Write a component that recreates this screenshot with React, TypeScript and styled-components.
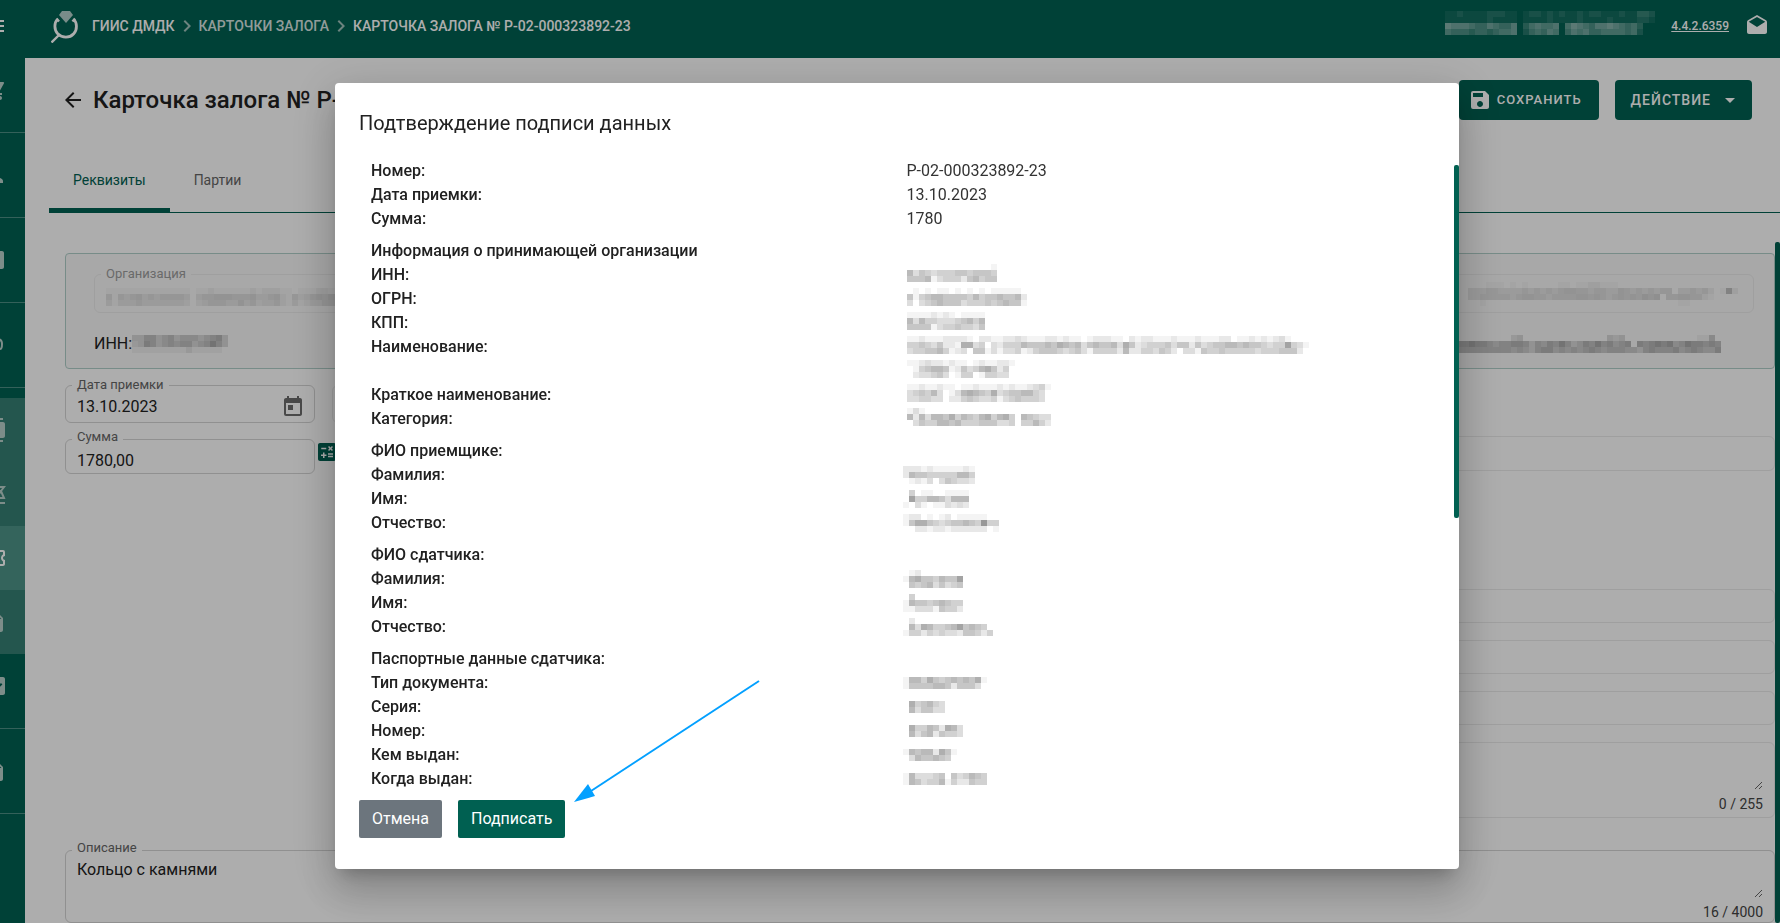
import React, { useId } from 'react';
import styled, { createGlobalStyle } from 'styled-components';
import {
  MdArrowBack, MdArrowDropDown, MdCalculate, MdChevronRight, MdDescription, MdDrafts, MdInsertDriveFile,
  MdMenu, MdSave, MdToday, MdArticle, MdContacts, MdOutlineConfirmationNumber, MdPerson,
  MdShoppingCart, MdFactCheck,
} from 'react-icons/md';

const green = '#006051';

const GlobalStyle = createGlobalStyle`
  *, *::before, *::after { box-sizing: border-box; }
  html, body, #root { height: 100%; }
  body {
    margin: 0;
    overflow: hidden;
    font: 400 16px/24px Roboto, "Liberation Sans", sans-serif;
    color: #212121;
    background: #fff;
  }
  button, input, textarea { font: inherit; color: inherit; }
`;

/* ---------- shell ---------- */

const Shell = styled.div`
  display: flex;
  flex-direction: column;
  height: 100vh;
  overflow: hidden;
`;

const Header = styled.header`
  flex: none;
  display: flex;
  align-items: center;
  height: 58px;
  padding: 0 11px 6px 0;
  background: ${green};
  color: #fff;
  overflow: hidden;
`;

const EdgeIcon = styled.div`
  flex: none;
  display: flex;
  justify-content: flex-end;
  width: 7px;
  margin-right: 44px;
  svg { flex: none; }
`;

const Crumbs = styled.nav`
  flex: 1;
  display: flex;
  align-items: center;
  margin-left: 14px;
  font-size: 14px;
  font-weight: 500;
  line-height: 20px;
  white-space: nowrap;
`;

const Crumb = styled.a<{ $dim?: boolean }>`
  color: ${(p) => (p.$dim ? '#d7e5e2' : '#fff')};
  text-decoration: none;
`;

const HeaderSide = styled.div`
  display: flex;
  align-items: center;
  gap: 16px;
`;

const Version = styled.a`
  color: #fff;
  font-size: 12px;
  font-weight: 500;
  line-height: 16px;
  text-decoration: underline;
`;

const PlainButton = styled.button`
  display: flex;
  padding: 0;
  border: 0;
  background: none;
  cursor: pointer;
`;

const Body = styled.div`
  flex: 1;
  display: flex;
  min-height: 0;
`;

const Sidebar = styled.nav`
  flex: none;
  width: 25px;
  background: ${green};
  overflow: hidden;
`;

const SideItem = styled.a<{ $short?: boolean }>`
  display: flex;
  align-items: center;
  justify-content: flex-end;
  height: ${(p) => (p.$short ? 75 : 85)}px;
  padding: 0 18px ${(p) => (p.$short ? 10 : 0)}px 0;
  border-bottom: 1px solid #4d8f85;
  color: #b9d0cb;
  svg { flex: none; }
`;

const SideGroup = styled.div`
  margin-top: 10px;
  background: #357f74;
`;

const SubItem = styled.a<{ $active?: boolean }>`
  display: flex;
  align-items: center;
  justify-content: flex-end;
  height: 64px;
  padding-right: 18px;
  color: ${(p) => (p.$active ? '#fff' : '#b9d0cb')};
  background: ${(p) => (p.$active ? '#4d9488' : 'transparent')};
  svg { flex: none; }
`;

/* ---------- page ---------- */

const Main = styled.main`
  flex: 1;
  display: flex;
  flex-direction: column;
  min-width: 0;
`;

const TitleRow = styled.div`
  flex: none;
  display: flex;
  align-items: center;
  gap: 8px;
  padding: 22px 28px 0 36px;
`;

const PageTitle = styled.h1`
  flex: 1;
  margin: 0;
  font-size: 24px;
  font-weight: 500;
  line-height: 32px;
  white-space: nowrap;
  overflow: hidden;
`;

const Actions = styled.div`
  display: flex;
  gap: 16px;
`;

const ActionButton = styled.button`
  display: flex;
  align-items: center;
  gap: 5px;
  height: 40px;
  padding: 0 17px 0 9px;
  border: 0;
  border-radius: 4px;
  background: ${green};
  color: #fff;
  font-size: 13px;
  font-weight: 500;
  letter-spacing: 1px;
  text-transform: uppercase;
`;

const MenuButton = styled(ActionButton)`
  padding: 0 10px 0 16px;
  gap: 7px;
  font-size: 14px;
`;

const Tabs = styled.div`
  flex: none;
  display: flex;
  height: 68px;
  margin: 25px 0 0 24px;
  border-bottom: 1px solid ${green};
`;

const Tab = styled.button<{ $active?: boolean }>`
  height: 68px;
  padding: 7px 24px 0;
  border: 0;
  border-bottom: 5px solid ${(p) => (p.$active ? green : 'transparent')};
  background: none;
  color: ${(p) => (p.$active ? green : '#666')};
  font-size: 14px;
  line-height: 20px;
`;

const ContentRow = styled.div`
  flex: 1;
  display: flex;
  min-height: 0;
  margin-top: 29px;
`;

const Content = styled.div`
  flex: 1;
  min-width: 0;
  overflow: hidden;
  padding: 11px 0 0 40px;
`;

const Rail = styled.div`
  flex: none;
  width: 5px;
`;

const Thumb = styled.div<{ $size: string; $offset?: number }>`
  width: 5px;
  height: ${(p) => p.$size};
  margin-top: ${(p) => p.$offset ?? 0}px;
  border-radius: 2px;
  background: ${green};
`;

const Card = styled.section`
  display: grid;
  grid-template-columns: 1fr 1fr;
  align-content: start;
  gap: 19px 16px;
  height: 116px;
  padding: 13px 20px 0 28px;
  border: 1px solid #b0cfc9;
  border-radius: 4px;
  background: #f8f8f8;
`;

const CardLine = styled.div<{ $end?: boolean }>`
  display: flex;
  align-items: center;
  justify-content: ${(p) => (p.$end ? 'flex-end' : 'flex-start')};
  height: 24px;
  padding-right: ${(p) => (p.$end ? 33 : 0)}px;
`;

const Frame = styled.fieldset<{ $h: number; $faint?: boolean; $w?: number }>`
  flex: ${(p) => (p.$w ? 'none' : '1')};
  display: flex;
  width: ${(p) => (p.$w ? `${p.$w}px` : 'auto')};
  height: ${(p) => p.$h}px;
  min-width: 0;
  margin: 0;
  padding: 0 9px 0 6px;
  border: 1px solid ${(p) => (p.$faint ? '#ebebeb' : '#d4d4d4')};
  border-radius: 6px;
`;

const BottomFrame = styled(Frame)`
  align-self: end;
`;

const Legend = styled.legend<{ $faint?: boolean; $raised?: boolean }>`
  height: ${(p) => (p.$raised ? 18 : 14)}px;
  padding: 0 5px;
  color: ${(p) => (p.$faint ? '#9c9c9c' : '#666')};
  font-size: 13px;
  line-height: 14px;
`;

const Inner = styled.div`
  flex: 1;
  display: flex;
  align-items: center;
  justify-content: space-between;
  min-width: 0;
  height: 100%;
  padding-left: 5px;
  color: #6c6c6c;
  svg { flex: none; }
`;

const TextInput = styled.input`
  flex: 1;
  min-width: 0;
  width: 100%;
  height: 24px;
  padding: 0;
  border: 0;
  outline: 0;
  background: transparent;
  color: #212121;
`;

const TextBox = styled.div`
  flex: 1;
  display: flex;
  flex-direction: column;
  gap: 4px;
  min-width: 0;
  padding: 0 2px 0 5px;
`;

const Area = styled.textarea<{ $h: number }>`
  display: block;
  width: 100%;
  height: ${(p) => p.$h}px;
  padding: 0;
  border: 0;
  outline: 0;
  background: transparent;
  line-height: 22px;
  resize: both;
  overflow: hidden;
`;

const Counter = styled.div`
  font-size: 14px;
  line-height: 20px;
  text-align: right;
  color: #444;
`;

const FormGrid = styled.div`
  display: grid;
  grid-template-columns: 1fr 1fr;
  margin-top: 9px;
`;

const LeftFields = styled.div`
  display: flex;
  flex-direction: column;
  gap: 7px;
`;

const FieldRow = styled.div<{ $gap: number }>`
  display: flex;
  align-items: flex-end;
  gap: ${(p) => p.$gap}px;
`;

const CalcButton = styled(PlainButton)`
  align-self: center;
  color: ${green};
`;

const RightFields = styled.div`
  display: flex;
  flex-direction: column;
  gap: 17px;
  padding-top: 58px;
`;

const FieldBlock = styled.div<{ $space?: number }>`
  display: flex;
  margin-bottom: ${(p) => p.$space ?? 0}px;
`;

/* ---------- dialog ---------- */

const Backdrop = styled.div`
  position: fixed;
  inset: 0;
  display: flex;
  padding: 83px 321px 54px 335px;
  background: rgba(0, 0, 0, 0.32);
`;

const Dialog = styled.section`
  position: relative;
  flex: 1;
  display: flex;
  flex-direction: column;
  min-width: 0;
  padding-bottom: 31px;
  border-radius: 4px;
  background: #fff;
  box-shadow: 0 11px 15px -7px rgba(0, 0, 0, 0.2), 0 24px 38px 3px rgba(0, 0, 0, 0.14),
    0 9px 46px 8px rgba(0, 0, 0, 0.12);
`;

const DialogTitle = styled.h2`
  flex: none;
  margin: 0;
  padding: 24px 24px 20px;
  font-size: 20px;
  font-weight: 400;
  line-height: 32px;
`;

const DialogBody = styled.div`
  flex: 1;
  display: flex;
  min-height: 0;
`;

const Details = styled.div`
  flex: 1;
  min-width: 0;
  overflow: hidden;
  padding: 0 24px;
`;

const Group = styled.dl`
  margin: 0 0 8px;
`;

const GroupTitle = styled.h3`
  margin: 0;
  padding: 0 12px;
  font-size: 16px;
  font-weight: 500;
  line-height: 24px;
`;

const Pair = styled.div`
  display: grid;
  grid-template-columns: 1fr 1fr;
  min-height: 24px;
`;

const Term = styled.dt`
  padding: 0 12px;
  font-weight: 500;
`;

const Value = styled.dd`
  margin: 0;
  padding: 0 0 0 12px;
  color: #333;
`;

const Redacted = styled.div<{ $wide?: boolean }>`
  display: flex;
  align-items: center;
  height: 24px;
  margin-left: ${(p) => (p.$wide ? -4 : 0)}px;
  padding-bottom: ${(p) => (p.$wide ? 0 : 4)}px;
`;

const DialogActions = styled.div`
  flex: none;
  display: flex;
  gap: 16px;
  padding: 10px 24px 0;
`;

const DialogButton = styled.button<{ $primary?: boolean }>`
  height: 38px;
  padding: 0 13px;
  border: 0;
  border-radius: 2px;
  background: ${(p) => (p.$primary ? green : '#6c757d')};
  color: #fff;
  line-height: 24px;
`;

const Pointer = styled.svg`
  position: absolute;
  left: 238px;
  bottom: 66px;
`;

/* ---------- drawings ---------- */

/* Pixelated block: every character is a 6px cell, 0 is clear and 9 is darkest. */
function Mosaic({ rows, color = '#000', strength = 0.045 }: { rows: string[]; color?: string; strength?: number }) {
  const w = Math.max(...rows.map((r) => r.length)) * 6;
  const h = rows.length * 6;
  return (
    <svg width={w} height={h} viewBox={`0 0 ${w} ${h}`} shapeRendering="crispEdges" aria-hidden="true">
      {rows.flatMap((row, y) =>
        [...row].map((c, x) =>
          c > '0' ? (
            <rect key={`${x}-${y}`} x={x * 6} y={y * 6} width={6} height={6} fill={color} fillOpacity={Number(c) * strength} />
          ) : null,
        ),
      )}
    </svg>
  );
}

function Logo() {
  return (
    <svg width="27" height="33" viewBox="0 0 27 33" fill="none" aria-hidden="true">
      <path d="M11 1h8l3 4-7 8-7-8z" fill="#b3cfcb" />
      <path d="M6.500 9.500C3 12.500 3 20 6.700 23.700c4.500 4.500 12 4.500 16 0 3.800-4 3.500-11.200 0-14.200" stroke="#fff" strokeWidth="2.800" />
      <path d="M8 11.500l-2.500-3M21.500 11.500l2.500-3M8 25l-7.500 7.500" stroke="#fff" strokeWidth="2.400" />
    </svg>
  );
}

function SupportIcon() {
  return (
    <svg width="24" height="24" viewBox="0 0 24 24" fill="none" stroke="currentColor" strokeWidth="2" aria-hidden="true">
      <path d="M4 6h10q5 0 5 5t-2 5" />
    </svg>
  );
}

function ScaleIcon() {
  return (
    <svg width="24" height="24" viewBox="0 0 24 24" fill="none" stroke="currentColor" strokeWidth="2" aria-hidden="true">
      <path d="M2 21h20M6 5h15l-3 4M12 9h6l3 7H3l3-7M18 9l-4 6" />
    </svg>
  );
}

/* ---------- fields ---------- */

function Field(props: {
  label: string; value?: string; height: number; width?: number; faint?: boolean; bare?: boolean; raised?: boolean;
  icon?: React.ReactNode; children?: React.ReactNode;
}) {
  const id = useId();
  return (
    <Frame $h={props.height} $w={props.width} $faint={props.faint}>
      {!props.bare && (
        <Legend $faint={props.faint} $raised={props.raised}>
          <label htmlFor={id}>{props.label}</label>
        </Legend>
      )}
      <Inner>
        {props.children}
        <TextInput id={id} aria-label={props.bare ? props.label : undefined} defaultValue={props.value ?? ''} disabled={props.faint} />
        {props.icon}
      </Inner>
    </Frame>
  );
}

function AreaField(props: { label: string; value?: string; height: number; counter: string; faint?: boolean; bare?: boolean }) {
  const id = useId();
  return (
    <Frame $h={props.height} $faint={props.faint}>
      {!props.bare && (
        <Legend $raised>
          <label htmlFor={id}>{props.label}</label>
        </Legend>
      )}
      <TextBox>
        <Area $h={props.bare ? 47 : 40} id={id} aria-label={props.bare ? props.label : undefined} defaultValue={props.value ?? ''} />
        <Counter>{props.counter}</Counter>
      </TextBox>
    </Frame>
  );
}

/* ---------- data ---------- */

type Row = { term: string; text?: string; blocks?: string[][] };

const groups: { title?: string; wide?: boolean; rows: Row[] }[] = [
  {
    rows: [
      { term: 'Номер:', text: 'P-02-000323892-23' },
      { term: 'Дата приемки:', text: '13.10.2023' },
      { term: 'Сумма:', text: '1780' },
    ],
  },
  {
    title: 'Информация о принимающей организации',
    rows: [
      { term: 'ИНН:', blocks: [['000000000000001', '635434445545554', '555613444256455']] },
      { term: 'ОГРН:', blocks: [['01010110101010111110', '51456655554645565562', '30345655534445456551']] },
      { term: 'КПП:', blocks: [['1111212101111', '6364433345646', '5555134454435']] },
      {
        term: 'Наименование:',
        blocks: [
          ['11211122221022112232111221211012221102122111211121112201121212310', '44543522177340324446555657656356556375234445355253455665655434484310', '34455641230551313341245554345314444262244354203315445444443444555200'],
          ['112322121101211221', '014566512534675240', '023345301440144330'],
        ],
      },
      { term: 'Краткое наименование:', blocks: [['112112110112111212112341', '345463013676547345566430', '334433022454334134544430']] },
      { term: 'Категория:', blocks: [['131000000000000000000000', '626366574654674674065433', '035446656444555334044642']] },
    ],
  },
  {
    title: 'ФИО приемщике:',
    wide: true,
    rows: [
      { term: 'Фамилия:', blocks: [['222121111121', '265544444664', '012130354332']] },
      { term: 'Имя:', blocks: [['04011001111', '08446653666', '10310113232']] },
      { term: 'Отчество:', blocks: [['1220101201111100', '1577543455654944', '0022122122222201']] },
    ],
  },
  {
    title: 'ФИО сдатчика:',
    wide: true,
    rows: [
      { term: 'Фамилия:', blocks: [['01200000000', '16755465580', '05456353450']] },
      { term: 'Имя:', blocks: [['0400000000', '1655456544', '1133315442']] },
      { term: 'Отчество:', blocks: [['0200000000000000', '0637644568565400', '1442434332554240']] },
    ],
  },
  {
    title: 'Паспортные данные сдатчика:',
    wide: true,
    rows: [
      { term: 'Тип документа:', blocks: [['16647545656571', '15555665255530']] },
      { term: 'Серия:', blocks: [['0745643', '0635533']] },
      { term: 'Номер:', blocks: [['0744652763', '0635625443']] },
      { term: 'Кем выдан:', blocks: [['165662751', '036556540']] },
      { term: 'Когда выдан:', blocks: [['16333450534654', '16534461422544']] },
    ],
  },
];

export default function App() {
  return (
    <>
      <GlobalStyle />
      <Shell>
        <Header>
          <EdgeIcon><MdMenu size={24} /></EdgeIcon>
          <Logo />
          <Crumbs aria-label="Навигация">
            <Crumb href="#">ГИИС ДМДК</Crumb>
            <MdChevronRight size={24} color="#9fc2bc" />
            <Crumb href="#" $dim>КАРТОЧКИ ЗАЛОГА</Crumb>
            <MdChevronRight size={24} color="#9fc2bc" />
            <Crumb href="#">КАРТОЧКА ЗАЛОГА № P-02-000323892-23</Crumb>
          </Crumbs>
          <HeaderSide>
            <Mosaic
              color="#fff"
              strength={0.075}
              rows={['11211112221101221212112122111211332', '11111112111101111211112111121111221', '76665446544603565560576546676545300', '54443443455602454650465644555545200', '0']}
            />
            <Version href="#">4.4.2.6359</Version>
            <MdDrafts size={24} />
          </HeaderSide>
        </Header>
        <Body>
          <Sidebar aria-label="Разделы">
            <SideItem href="#" $short><MdShoppingCart size={24} /></SideItem>
            <SideItem href="#"><MdPerson size={24} /></SideItem>
            <SideItem href="#"><MdArticle size={24} /></SideItem>
            <SideItem href="#"><SupportIcon /></SideItem>
            <SideGroup>
              <SubItem href="#"><MdContacts size={24} /></SubItem>
              <SubItem href="#"><ScaleIcon /></SubItem>
              <SubItem href="#" $active><MdOutlineConfirmationNumber size={24} /></SubItem>
              <SubItem href="#"><MdDescription size={24} /></SubItem>
            </SideGroup>
            <SideItem href="#" $short><MdFactCheck size={24} /></SideItem>
            <SideItem href="#"><MdInsertDriveFile size={24} /></SideItem>
          </Sidebar>
          <Main>
            <TitleRow>
              <PlainButton aria-label="Назад"><MdArrowBack size={24} /></PlainButton>
              <PageTitle>Карточка залога № P-02-000323892-23</PageTitle>
              <Actions>
                <ActionButton><MdSave size={24} />Сохранить</ActionButton>
                <MenuButton>Действие<MdArrowDropDown size={24} /></MenuButton>
              </Actions>
            </TitleRow>
            <Tabs role="tablist">
              <Tab role="tab" aria-selected $active>Реквизиты</Tab>
              <Tab role="tab">Партии</Tab>
            </Tabs>
            <ContentRow>
              <Content>
                <Card>
                  <Field label="Организация" height={46} faint>
                    <Mosaic strength={0.025} rows={['111111111111110112111111212221101112211', '414345343444430344555444533452142345455', '313334333333320234443353423342131233444']} />
                  </Field>
                  <BottomFrame $h={39} $faint as="div">
                    <Inner>
                      <TextInput aria-label="Адрес" disabled />
                      <Mosaic
                        strength={0.025}
                        rows={['0001110101000001101122111000000000000000000000', '3334433334343434554434433543434344033434201920', '3344444345544344445545434545465604455442100000', '0010000000000000000000000000000000011000000000']}
                      />
                    </Inner>
                  </BottomFrame>
                  <CardLine>
                    ИНН:
                    <Mosaic rows={['3355345344434563', '2365345455345753', '1111111112111110']} />
                  </CardLine>
                  <CardLine $end>
                    <Mosaic rows={['00000000023000000000000003230000000000001140', '66766545566535465753465756456065676745766565', '55555555545435664545456545554435655564565446']} />
                  </CardLine>
                </Card>
                <FormGrid>
                  <LeftFields>
                    <FieldRow $gap={17}>
                      <Field label="Дата приемки" value="13.10.2023" height={45} width={250} icon={<MdToday size={24} />} />
                      <Field label="Время приемки" height={38} faint bare />
                    </FieldRow>
                    <FieldRow $gap={0}>
                      <Field label="Сумма" value="1780,00" height={44} width={250} raised />
                      <CalcButton aria-label="Рассчитать"><MdCalculate size={24} /></CalcButton>
                    </FieldRow>
                  </LeftFields>
                  <RightFields>
                    <FieldBlock $space={101}><Field label="Фамилия" height={35} faint bare /></FieldBlock>
                    <FieldBlock><Field label="Имя" height={34} faint bare /></FieldBlock>
                    <FieldBlock><Field label="Отчество" height={34} faint bare /></FieldBlock>
                    <FieldBlock><Field label="Документ" height={34} faint bare /></FieldBlock>
                    <FieldBlock $space={23}><AreaField label="Примечание" height={76} counter="0 / 255" faint bare /></FieldBlock>
                  </RightFields>
                </FormGrid>
                <FieldBlock>
                  <AreaField label="Описание" value="Кольцо с камнями" height={82} counter="16 / 4000" />
                </FieldBlock>
              </Content>
              <Rail><Thumb $size="100%" /></Rail>
            </ContentRow>
          </Main>
        </Body>
      </Shell>

      <Backdrop>
        <Dialog role="dialog" aria-modal="true" aria-labelledby="dialog-title">
          <DialogTitle id="dialog-title">Подтверждение подписи данных</DialogTitle>
          <DialogBody>
            <Details>
              {groups.map((g, i) => (
                <React.Fragment key={i}>
                  {g.title && <GroupTitle>{g.title}</GroupTitle>}
                  <Group>
                    {g.rows.map((r) => (
                      <Pair key={r.term}>
                        <Term>{r.term}</Term>
                        <Value>
                          {r.text}
                          {r.blocks?.map((b, k) => <Redacted key={k} $wide={g.wide}><Mosaic rows={b} /></Redacted>)}
                        </Value>
                      </Pair>
                    ))}
                  </Group>
                </React.Fragment>
              ))}
            </Details>
            <Rail><Thumb $size="56%" $offset={6} /></Rail>
          </DialogBody>
          <DialogActions>
            <DialogButton>Отмена</DialogButton>
            <DialogButton $primary>Подписать</DialogButton>
          </DialogActions>
          <Pointer width="188" height="124" viewBox="0 0 188 124" aria-hidden="true">
            <path d="M186 2L18 112" stroke="#03a0ff" strokeWidth="2" />
            <path d="M1 123l14-18 7 12z" fill="#03a0ff" />
          </Pointer>
        </Dialog>
      </Backdrop>
    </>
  );
}
